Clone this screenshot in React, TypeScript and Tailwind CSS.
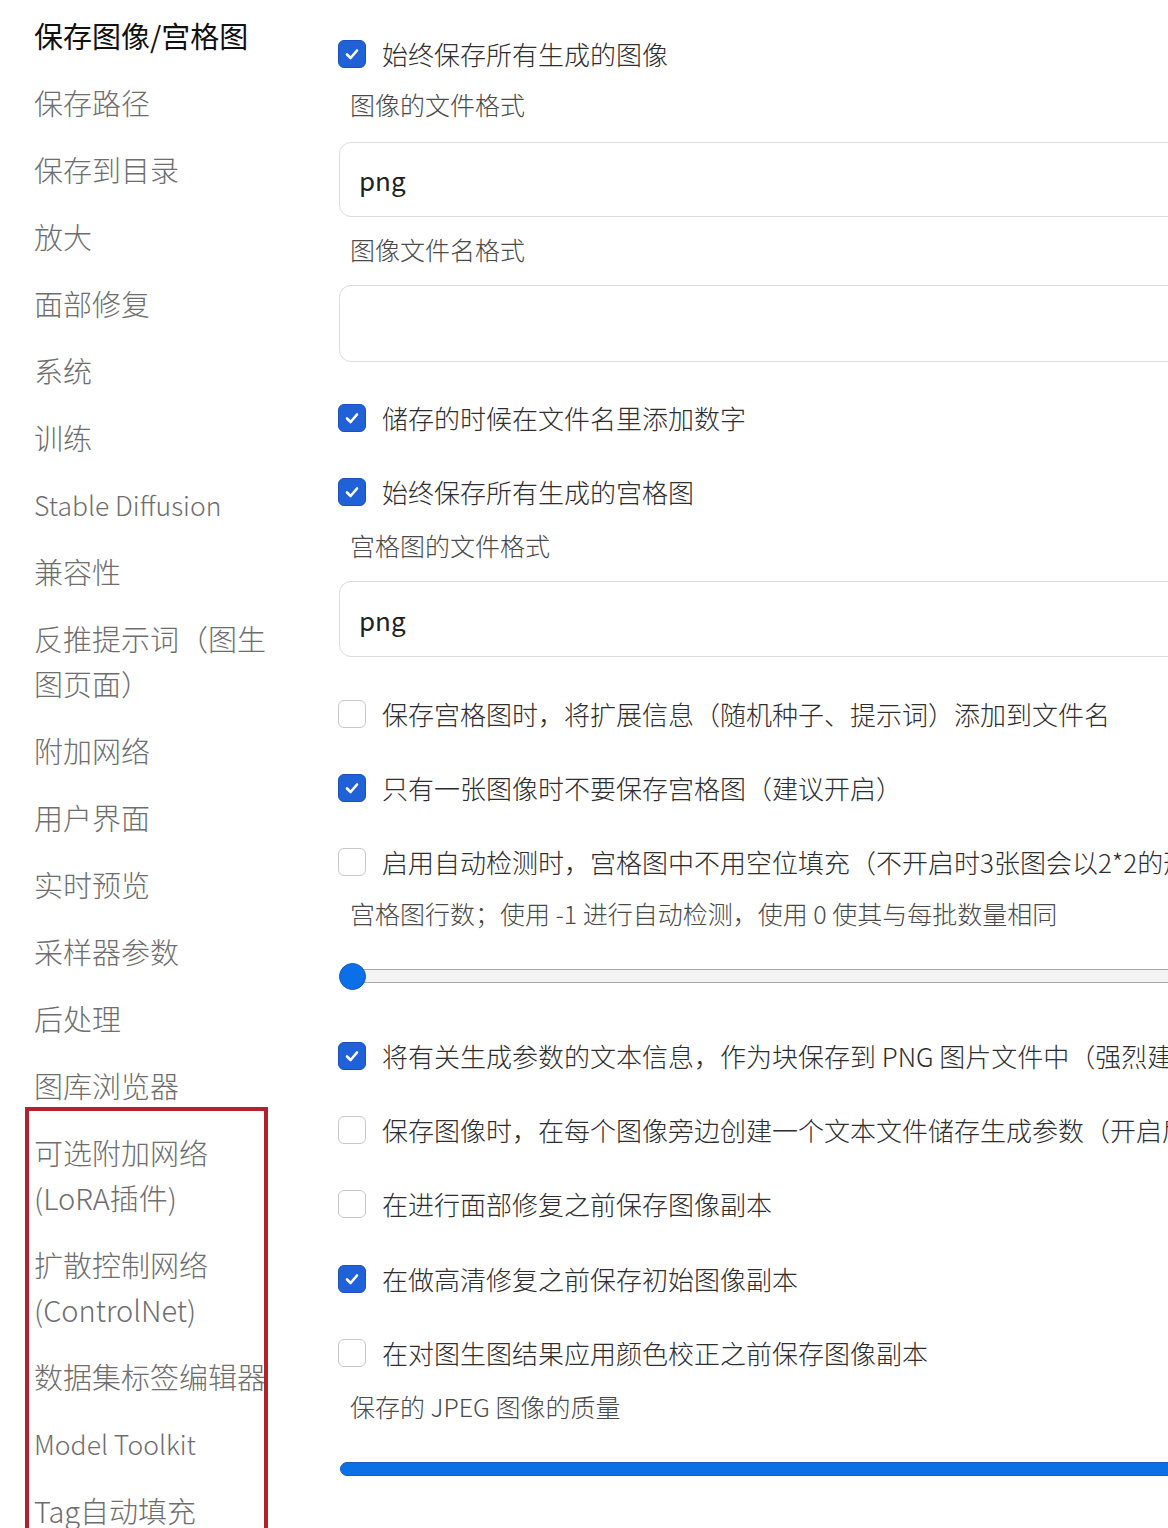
import React from "react";

const FONT = { fontFamily: '"Noto Sans CJK SC", "Noto Sans", sans-serif' };

function Check({ on }: { on: boolean }) {
  if (on)
    return (
      <span className="flex h-[28px] w-[28px] flex-none items-center justify-center rounded-[6px] bg-[#2161d8] border border-[#1a52bb]">
        <svg width="18" height="18" viewBox="0 0 18 18" fill="none">
          <path d="M4 9.5 L7.6 13 L14 5.5" stroke="white" strokeWidth="2.6" strokeLinecap="round" strokeLinejoin="round" />
        </svg>
      </span>
    );
  return <span className="h-[28px] w-[28px] flex-none rounded-[6px] border border-[#c8c8c8] bg-white" />;
}

function CheckRow({ on, text, mt }: { on: boolean; text: string; mt: string }) {
  return (
    <div className={`flex h-[36px] items-center gap-[16px] whitespace-nowrap ${mt}`}>
      <Check on={on} />
      <span className="text-[26px] font-light text-[#2e2e2e] leading-[36px]">{text}</span>
    </div>
  );
}

function Label({ text, mt }: { text: string; mt: string }) {
  return <div className={`h-[36px] pl-[12px] text-[25px] font-light leading-[36px] text-[#4a4a4a] whitespace-nowrap ${mt}`}>{text}</div>;
}

function Input({ value, h, mt }: { value: string; h: string; mt: string }) {
  return (
    <div className={`ml-px flex items-center rounded-[12px] border border-[#dcdcdc] bg-white pl-[19px] text-[26px] text-[#222] ${h} ${mt}`}>
      {value}
    </div>
  );
}

const sideTop = [
  "保存路径",
  "保存到目录",
  "放大",
  "面部修复",
  "系统",
  "训练",
  "Stable Diffusion",
  "兼容性",
  "反推提示词（图生图页面）",
  "附加网络",
  "用户界面",
  "实时预览",
  "采样器参数",
  "后处理",
  "图库浏览器",
];
const sideBottom = ["可选附加网络(LoRA插件)", "扩散控制网络(ControlNet)", "数据集标签编辑器", "Model Toolkit", "Tag自动填充"];

function SideItem({ t }: { t: string }) {
  const latin = t === "Stable Diffusion" || t === "Model Toolkit";
  return <div className={latin ? "text-[26.5px]" : ""}>{t}</div>;
}

export default function App() {
  return (
    <div className="h-[1528px] w-full overflow-hidden bg-white" style={FONT}>
      <div className="flex pl-[34px]">
        <div className="flex w-[240px] flex-none flex-col gap-[22px] pt-[13px] text-[29px] font-light leading-[45px] text-[#6e6e6e]">
          <div className="font-normal text-[#111]">保存图像/宫格图</div>
          {sideTop.map((t) => (
            <SideItem key={t} t={t} />
          ))}
          <div className="relative flex flex-col gap-[22px]">
            {sideBottom.map((t) => (
              <SideItem key={t} t={t} />
            ))}
            <div className="pointer-events-none absolute -top-[23px] -left-[9px] right-[6px] -bottom-[60px] border-[4px] border-[#b3232e]" />
          </div>
        </div>
        <div className="ml-[64px] flex w-[900px] flex-none flex-col">
          <CheckRow on text="始终保存所有生成的图像" mt="mt-[36px]" />
          <Label text="图像的文件格式" mt="mt-[14px]" />
          <Input value="png" h="h-[75px]" mt="mt-[20px]" />
          <Label text="图像文件名格式" mt="mt-[14px]" />
          <Input value="" h="h-[77px]" mt="mt-[18px]" />
          <CheckRow on text="储存的时候在文件名里添加数字" mt="mt-[38px]" />
          <CheckRow on text="始终保存所有生成的宫格图" mt="mt-[38px]" />
          <Label text="宫格图的文件格式" mt="mt-[17px]" />
          <Input value="png" h="h-[76px]" mt="mt-[18px]" />
          <CheckRow on={false} text="保存宫格图时，将扩展信息（随机种子、提示词）添加到文件名" mt="mt-[39px]" />
          <CheckRow on text="只有一张图像时不要保存宫格图（建议开启）" mt="mt-[38px]" />
          <CheckRow on={false} text="启用自动检测时，宫格图中不用空位填充（不开启时3张图会以2*2的形式排列）" mt="mt-[38px]" />
          <Label text="宫格图行数；使用 -1 进行自动检测，使用 0 使其与每批数量相同" mt="mt-[15px]" />
          <div className="relative mt-[31px] flex h-[28px] items-center">
            <div className="ml-[14px] h-[14px] flex-1 border-y border-[#a9a9a9] bg-[#f3f3f3]" />
            <div className="absolute left-px top-px h-[27px] w-[27px] rounded-full border border-[#1556b8] bg-[#0b6fe8]" />
          </div>
          <CheckRow on text="将有关生成参数的文本信息，作为块保存到 PNG 图片文件中（强烈建议开启）" mt="mt-[48px]" />
          <CheckRow on={false} text="保存图像时，在每个图像旁边创建一个文本文件储存生成参数（开启后会产生大量文本文件）" mt="mt-[38px]" />
          <CheckRow on={false} text="在进行面部修复之前保存图像副本" mt="mt-[38px]" />
          <CheckRow on text="在做高清修复之前保存初始图像副本" mt="mt-[39px]" />
          <CheckRow on={false} text="在对图生图结果应用颜色校正之前保存图像副本" mt="mt-[38px]" />
          <Label text="保存的 JPEG 图像的质量" mt="mt-[17px]" />
          <div className="ml-[2px] mt-[38px] h-[14px] rounded-full border border-[#1b5cb8] bg-[#0b6fe8]" />
        </div>
      </div>
    </div>
  );
}
